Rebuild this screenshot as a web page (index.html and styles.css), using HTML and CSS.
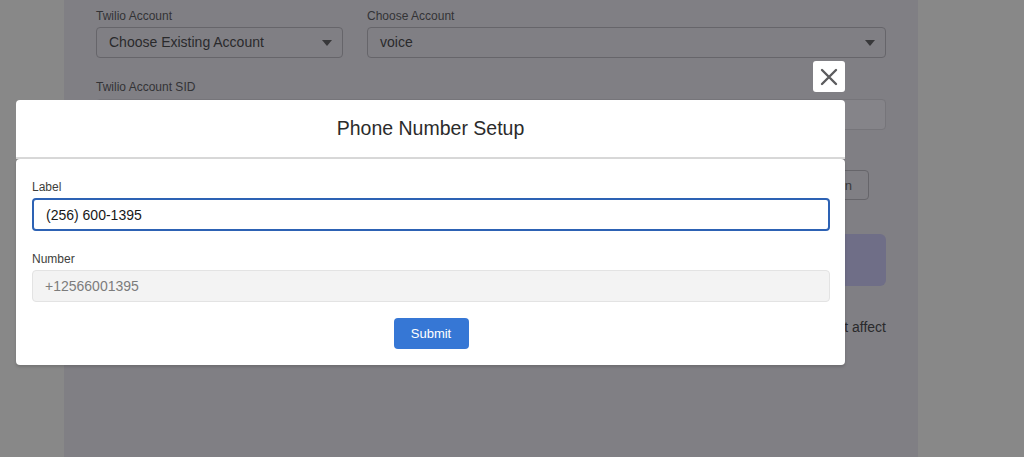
FILE: index.html
```html
<!DOCTYPE html>
<html lang="en">
<head>
    <meta charset="UTF-8">
    <meta name="viewport" content="width=device-width, initial-scale=1.0">
    <title>Phone Number Setup</title>
    <link rel="stylesheet" href="styles.css">
</head>
<body>
    <div id="page">
        <div class="row">
            <div class="field col-narrow">
                <div class="bg-label">Twilio Account</div>
                <div class="bg-select">Choose Existing Account<span class="caret"></span></div>
            </div>
            <div class="field col-wide">
                <div class="bg-label">Choose Account</div>
                <div class="bg-select">voice<span class="caret"></span></div>
            </div>
        </div>

        <div class="bg-label sid-label">Twilio Account SID</div>
        <div class="bg-input"></div>

        <div class="btn-row">
            <button class="bg-button">Test Connection</button>
        </div>

        <div class="bg-notice"></div>

        <p class="bg-text">Changing the phone number label will not affect</p>
    </div>

    <div id="modal">
        <button id="close-btn" aria-label="Close">
            <svg width="18" height="18" viewBox="0 0 18 18">
                <path d="M2 2 L16 16 M16 2 L2 16" stroke="#5c5c5e" stroke-width="2.4" stroke-linecap="round" fill="none"/>
            </svg>
        </button>
        <div class="modal-header">
            <h2>Phone Number Setup</h2>
        </div>
        <div class="modal-body">
            <div class="form-field">
                <label for="label-input">Label</label>
                <input type="text" id="label-input" class="focused" value="(256) 600-1395">
            </div>
            <div class="form-field last-field">
                <label for="number-input">Number</label>
                <input type="text" id="number-input" value="+12566001395" disabled>
            </div>
            <div class="actions">
                <button id="submit-btn">Submit</button>
            </div>
        </div>
    </div>
</body>
</html>
```

FILE: styles.css
```css
body {
    font-family: "Liberation Sans", Arial, sans-serif;
    background-color: #888888;
    margin: 0;
    padding: 0;
    height: 457px;
    overflow: hidden;
    position: relative;
}

/* dimmed page behind the modal */
#page {
    margin-left: 64px;
    width: 854px;
    height: 457px;
    box-sizing: border-box;
    padding: 8px 32px 0 32px;
    background-color: #807f84;
}

.row {
    display: flex;
    gap: 24px;
}

.col-narrow {
    width: 247px;
}

.col-wide {
    flex: 1;
}

.bg-label {
    font-size: 12px;
    line-height: 16px;
    color: #333336;
    margin-bottom: 3px;
}

.sid-label {
    margin-top: 21px;
    margin-bottom: 4px;
}

.bg-select {
    position: relative;
    height: 31px;
    box-sizing: border-box;
    border: 1px solid #66656a;
    border-radius: 4px;
    padding: 0 12px;
    font-size: 14px;
    line-height: 29px;
    color: #2a2a2c;
}

.caret {
    position: absolute;
    right: 10px;
    top: 12px;
    width: 0;
    height: 0;
    border-left: 5px solid transparent;
    border-right: 5px solid transparent;
    border-top: 6px solid #38383a;
}

.bg-input {
    height: 31px;
    box-sizing: border-box;
    border: 1px solid #76757a;
    border-radius: 4px;
    background-color: #858489;
}

.btn-row {
    display: flex;
    justify-content: flex-end;
    padding-right: 17px;
    margin-top: 40px;
}

.bg-button {
    height: 30px;
    padding: 0 16px;
    font-family: inherit;
    font-size: 13px;
    color: #3a3a3c;
    background-color: #807f84;
    border: 1px solid #66656a;
    border-radius: 4px;
}

.bg-notice {
    margin-top: 34px;
    height: 52px;
    border-radius: 6px;
    background-color: #6f6e87;
}

.bg-text {
    margin: 31px 0 0 0;
    font-size: 14px;
    line-height: 20px;
    color: #2a2a2c;
    text-align: right;
}

/* modal */
#modal {
    position: absolute;
    left: 16px;
    top: 61px;
    width: 829px;
    display: flex;
    flex-direction: column;
}

#close-btn {
    align-self: flex-end;
    width: 32px;
    height: 31px;
    margin-bottom: 8px;
    padding: 0;
    background-color: #fff;
    border: none;
    border-radius: 3px;
    display: flex;
    align-items: center;
    justify-content: center;
    cursor: pointer;
}

.modal-header {
    background-color: #fff;
    border-radius: 4px 4px 0 0;
    height: 57px;
    display: flex;
    align-items: center;
    justify-content: center;
    border-bottom: 2px solid #d8d8d8;
}

.modal-header h2 {
    margin: 0;
    font-size: 19.5px;
    font-weight: normal;
    color: #2b2b2b;
}

.modal-body {
    background-color: #fff;
    border-radius: 4px;
    padding: 20px 15px 16px 16px;
    box-shadow: 0 2px 3px rgba(0, 0, 0, 0.15);
}

.form-field {
    display: flex;
    flex-direction: column;
    margin-bottom: 20px;
}

.form-field.last-field {
    margin-bottom: 0;
}

.form-field label {
    font-size: 12px;
    line-height: 16px;
    color: #3e3e3c;
    margin-bottom: 3px;
}

.form-field input {
    height: 32px;
    box-sizing: border-box;
    padding: 0 12px;
    font-family: inherit;
    font-size: 14px;
    color: #181818;
    border: 1px solid #dddbda;
    border-radius: 4px;
    outline: none;
}

.form-field input.focused {
    height: 33px;
    border: 2px solid #2d62b4;
    padding-left: 12px;
}

.form-field input:disabled {
    background-color: #f3f3f3;
    border-color: #e3e3e3;
    color: #7c7c7c;
}

.actions {
    display: flex;
    justify-content: center;
    margin-top: 16px;
}

#submit-btn {
    width: 75px;
    height: 31px;
    font-family: inherit;
    font-size: 13px;
    color: #fff;
    background-color: #3677d5;
    border: none;
    border-radius: 4px;
    cursor: pointer;
}
```
